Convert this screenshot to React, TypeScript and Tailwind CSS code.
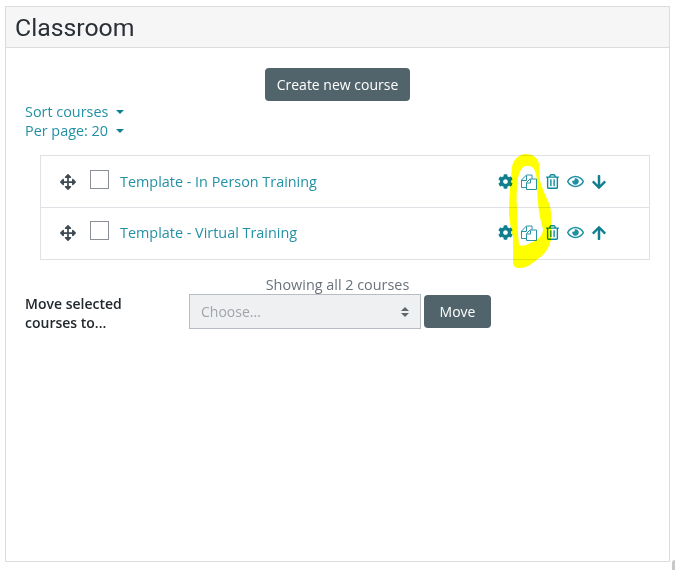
import React from "react";
import { FaArrowDown, FaArrowUp, FaArrowsAlt, FaCog, FaRegEye, FaRegTrashAlt } from "react-icons/fa";

const sans = { fontFamily: '"Open Sans", sans-serif' };

function Copy() {
  return (
    <svg width="17" height="16" viewBox="0 0 17 16" fill="none" stroke="#2a93a6" strokeWidth="1">
      <path d="M1.5 13.5H6M1.5 13.5V6L6.5 1H12V5" />
      <path d="M1.5 6.5H6.5V1.5" />
      <path d="M6.5 15.5V8.5L10 5H16.5V15.5Z" fill="white" />
      <path d="M6.5 9H10.5V5.5" />
    </svg>
  );
}

function Row({ title, last, down }: { title: string; last?: boolean; down?: boolean }) {
  return (
    <div className={`flex items-center pl-[19px] ${last ? "h-[51px] pb-[2px]" : "h-[52px] border-b border-[#dee2e6]"}`}>
      <FaArrowsAlt className="w-4 h-4 text-[#3f4a52] mr-[14px]" />
      <div className="w-[19px] h-[19px] border border-[#8a8f96] bg-white mr-[11px] -mt-[5px]" />
      <a className="text-[14.4px] text-[#2391a5] w-[378px]">{title}</a>
      <div className="flex items-center">
        <FaCog className="w-[15px] h-[15px] text-[#0f7f90] mr-[7px]" />
        <span className="mr-[9px]"><Copy /></span>
        <FaRegTrashAlt className="w-[13px] h-[15px] text-[#0f8a9c] mr-[8px]" />
        <FaRegEye className="w-[17px] h-[17px] text-[#1f8fa3] mr-[7px]" />
        {down ? <FaArrowDown className="w-[16px] h-[16px] text-[#0f7f90]" /> : <FaArrowUp className="w-[16px] h-[16px] text-[#0f7f90]" />}
      </div>
    </div>
  );
}

function Caret() {
  return <span className="ml-[8px] mb-[3px] inline-block border-x-[4px] border-t-[4px] border-x-transparent border-t-[#0f7f90] align-middle" />;
}

export default function App() {
  return (
    <div className="relative w-[675px] h-[570px] bg-white overflow-hidden" style={sans}>
      <div className="ml-[5px] mt-[6px] w-[665px] h-[556px] border border-[#dcdcdc] flex flex-col">
        <div className="h-[41px] bg-[#f6f6f6] border-b border-[#dcdcdc] pl-[9px] pt-[1px] flex items-center text-[24.8px] text-[#2b2f36]" style={{ fontFamily: "Roboto, sans-serif" }}>
          Classroom
        </div>
        <div className="flex-1 pl-[19px] pr-[19px]">
          <div className="flex justify-center pt-[20px]">
            <button className="h-[33px] w-[145px] rounded-[4px] bg-[#52646b] text-white text-[14px]">Create new course</button>
          </div>
          <div className="mt-[1px] text-[14.4px] leading-[19px] text-[#2391a5]">
            <div>Sort courses<Caret /></div>
            <div>Per page: 20<Caret /></div>
          </div>
          <div className="ml-[15px] mt-[15px] w-[610px] border border-[#dee2e6]">
            <Row title="Template - In Person Training" down />
            <Row title="Template - Virtual Training" last />
          </div>
          <div className="mt-[15px] text-center text-[14.4px] leading-[19px] text-[#6a737b]">Showing all 2 courses</div>
          <div className="flex">
            <div className="w-[164px] text-[14px] leading-[19px] font-semibold text-[#23282d]">Move selected<br />courses to...</div>
            <div className="w-[232px] h-[35px] border border-[#b8bdc3] bg-[#eff0f2] flex items-center justify-between pl-[11px] pr-[11px] text-[14px] text-[#a0a5ab]">
              <span>Choose...</span>
              <span className="flex flex-col gap-[2px]">
                <span className="block border-x-[4px] border-b-[4px] border-x-transparent border-b-[#5f666d]" />
                <span className="block border-x-[4px] border-t-[4px] border-x-transparent border-t-[#5f666d]" />
              </span>
            </div>
            <button className="ml-[3px] mt-[1px] h-[33px] w-[67px] rounded-[4px] bg-[#52646b] text-white text-[14px]">Move</button>
          </div>
        </div>
      </div>
      <svg className="absolute left-0 top-0 pointer-events-none mix-blend-multiply" width="675" height="570">
        <path fillRule="evenodd" fill="#ffff00" d="M525 154C532 154 538 157 539 164C540 172 539 178 541 184C544 195 551 203 551 213V240C549 248 545 254 539 258C533 263 527 268 520 268C515 268 513 266 513 262V237C511 228 509 220 509 209C509 195 511 180 512 167C513 160 518 155 525 154ZM523 167C520 171 519 174 518 178C517 188 516 197 517 207C517 220 518 235 519 245C521 246 523 246 526 245C532 243 536 240 539 238C542 235 543 232 543 229C542 225 541 222 540 217C538 206 537 195 537 183C537 175 535 171 534 169C531 165 527 165 523 167Z" />
      </svg>
      <div className="absolute left-[672px] top-[560px] w-[3px] h-[10px] bg-[#c8c8c8] rounded-tl-[3px]" />
    </div>
  );
}
